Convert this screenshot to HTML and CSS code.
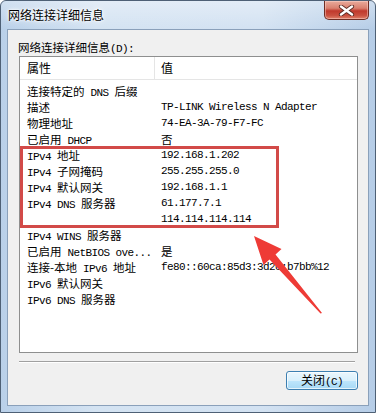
FILE: index.html
```html
<!DOCTYPE html>
<html>
<head>
  <title>网络连接详细信息</title>
  <link rel="stylesheet" href="styles.css">
</head>
<body>
  <div class="window">
    <div class="titlebar">
      <span class="title">网络连接详细信息</span>
      <div class="close">
        <svg width="17" height="11" viewBox="0 0 17 11">
          <path d="M3 1.5 L14 9.5 M14 1.5 L3 9.5" stroke="#5a2a22" stroke-width="4.2" stroke-linecap="round"/>
          <path d="M3 1.5 L14 9.5 M14 1.5 L3 9.5" stroke="#fff" stroke-width="2.4" stroke-linecap="round"/>
        </svg>
      </div>
    </div>

    <div class="client">
      <div class="label">网络连接详细信息<span class="en">(D):</span></div>

      <div class="listbox">
        <div class="header">
          <div class="c1">属性</div>
          <div class="c2">值</div>
        </div>
        <div class="rows">
          <div class="row"><div class="c1">连接特定的<span class="en"> DNS </span>后缀</div><div class="c2"></div></div>
          <div class="row"><div class="c1">描述</div><div class="c2 en">TP-LINK Wireless N Adapter</div></div>
          <div class="row"><div class="c1">物理地址</div><div class="c2 en">74-EA-3A-79-F7-FC</div></div>
          <div class="row"><div class="c1">已启用<span class="en"> DHCP</span></div><div class="c2">否</div></div>
          <div class="row"><div class="c1"><span class="en">IPv4 </span>地址</div><div class="c2 en">192.168.1.202</div></div>
          <div class="row"><div class="c1"><span class="en">IPv4 </span>子网掩码</div><div class="c2 en">255.255.255.0</div></div>
          <div class="row"><div class="c1"><span class="en">IPv4 </span>默认网关</div><div class="c2 en">192.168.1.1</div></div>
          <div class="row"><div class="c1"><span class="en">IPv4 DNS </span>服务器</div><div class="c2 en">61.177.7.1</div></div>
          <div class="row"><div class="c1"></div><div class="c2 en">114.114.114.114</div></div>
          <div class="row"><div class="c1"><span class="en">IPv4 WINS </span>服务器</div><div class="c2"></div></div>
          <div class="row"><div class="c1">已启用<span class="en"> NetBIOS ove...</span></div><div class="c2">是</div></div>
          <div class="row"><div class="c1">连接-本地<span class="en"> IPv6 </span>地址</div><div class="c2 en">fe80::60ca:85d3:3d2c:b7bb%12</div></div>
          <div class="row"><div class="c1"><span class="en">IPv6 </span>默认网关</div><div class="c2"></div></div>
          <div class="row"><div class="c1"><span class="en">IPv6 DNS </span>服务器</div><div class="c2"></div></div>
        </div>
      </div>

      <div class="sep"></div>

      <div class="footer">
        <button class="btn">关闭<span class="en">(C)</span></button>
      </div>
    </div>

    <!-- annotation drawn over the dialog -->
    <svg class="marks" width="376" height="413" viewBox="0 0 376 413">
      <rect x="21.5" y="147.5" width="256" height="79" fill="none" stroke="#d24a48" stroke-width="3"/>
      <polygon points="254,236 281.5,249 275.5,254.4 322,313 320.5,313.5 269.5,259.6 263.5,265" fill="#ee3b36"/>
    </svg>
  </div>
</body>
</html>
```

FILE: styles.css
```css
body {
  margin: 0;
  background: #fff;
  font-family: "Noto Sans CJK SC", sans-serif;
  font-size: 11.5px;
  color: #000;
}

.window {
  position: relative;
  width: 376px;
  height: 413px;
  box-sizing: border-box;
  border: 1px solid #4e6075;
  border-radius: 6px 6px 0 0;
  background: linear-gradient(to right, #b9d0e9, #d4e3f2 25%, #d3e2f2 70%, #b6cde7);
  overflow: hidden;
}

.titlebar {
  height: 28px;
  display: flex;
  align-items: flex-start;
  padding-left: 7px;
  background: linear-gradient(to bottom, rgba(255,255,255,0.35), rgba(255,255,255,0));
}

.title {
  line-height: 27px;
  font-size: 12px;
  text-shadow: 0 0 6px #fff, 0 0 3px #fff, 0 0 2px #fff;
}

.close {
  margin-left: auto;
  margin-right: 6px;
  width: 45px;
  height: 19px;
  box-sizing: border-box;
  border: 1px solid #6e2d24;
  border-top: none;
  border-radius: 0 0 5px 5px;
  background: linear-gradient(to bottom, #e9ab9c 0%, #d9806f 40%, #c0392c 55%, #c9503f 80%, #e0826b 100%);
  box-shadow: inset 0 0 0 1px rgba(255,220,210,0.45);
  display: flex;
  align-items: center;
  justify-content: center;
}

.client {
  height: 377px;
  box-sizing: border-box;
  margin: 0 6px;
  background: #f0f0f0;
  border: 1px solid #8aa0ba;
}

.label {
  padding: 9px 0 0 10px;
  height: 16px;
  line-height: 16px;
}

.en {
  font-family: "Liberation Mono", monospace;
  font-size: 11px;
  letter-spacing: -0.6px;
  white-space: pre;
}

.listbox {
  margin: 1px 10px 0 11px;
  height: 297px;
  box-sizing: border-box;
  background: #fff;
  border: 1px solid #8e8f8f;
}

.header {
  display: flex;
  height: 22px;
  line-height: 22px;
  border-bottom: 1px solid #e5e5e5;
  font-size: 12px;
}

.header .c1 {
  border-right: 1px solid #e5e5e5;
}

.c1 {
  width: 135px;
  box-sizing: border-box;
  padding-left: 7px;
  white-space: nowrap;
  overflow: hidden;
}

.c2 {
  flex: 1;
  padding-left: 6px;
  white-space: nowrap;
}

.rows {
  padding-top: 3px;
}

.row {
  display: flex;
  height: 16px;
  line-height: 16px;
}

.sep {
  margin: 8px 13px 0 11px;
  height: 1px;
  background: #a0a0a0;
  border-bottom: 1px solid #fff;
}

.footer {
  display: flex;
  justify-content: flex-end;
  padding: 8px 10px 0 0;
}

.btn {
  width: 72px;
  height: 19px;
  padding: 0;
  font-family: "Noto Sans CJK SC", sans-serif;
  font-size: 12px;
  line-height: 16px;
  color: #000;
  border: 1px solid #3c7fb1;
  border-radius: 3px;
  background: linear-gradient(to bottom, #eaf6fd 0%, #d9f0fc 50%, #bee6fd 51%, #a7d9f5 100%);
  box-shadow: inset 0 0 0 1px rgba(255,255,255,0.7);
}

.marks {
  position: absolute;
  left: -1px;
  top: -1px;
  pointer-events: none;
}
```
